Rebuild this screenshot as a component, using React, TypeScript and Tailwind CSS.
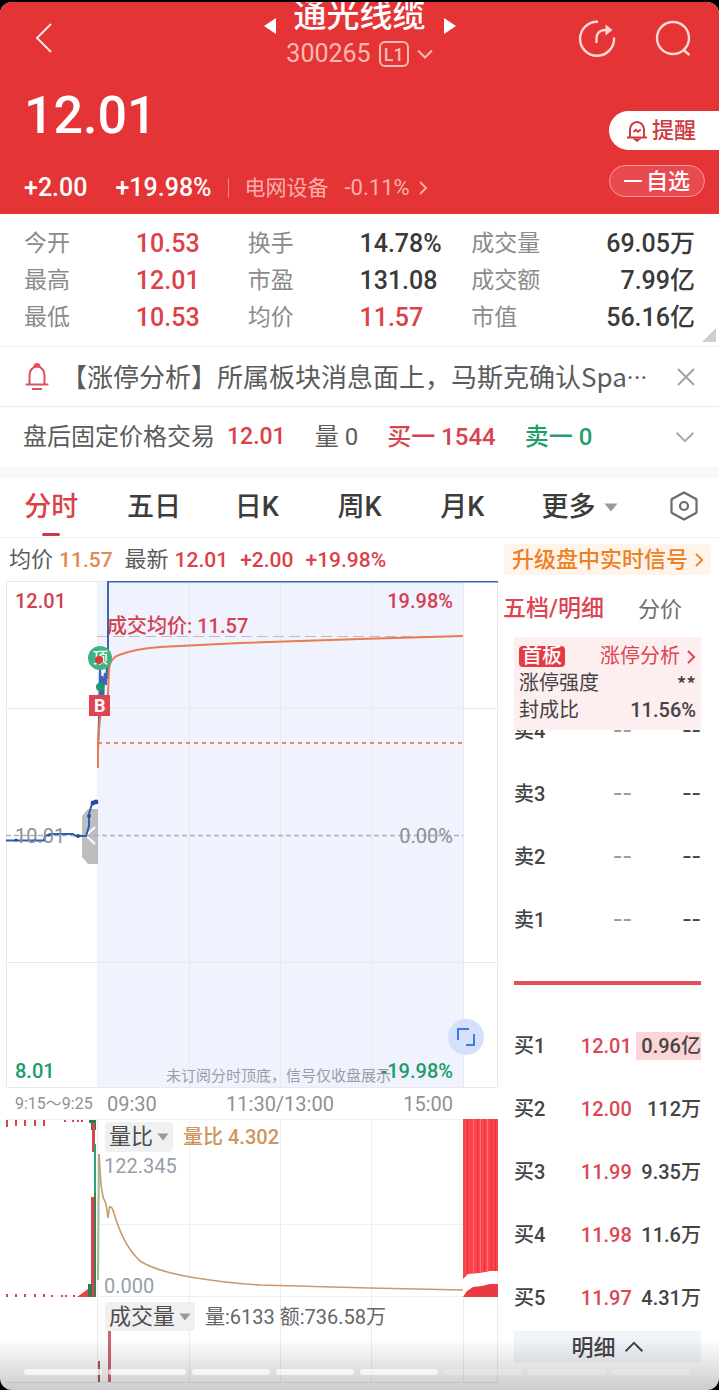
import React from "react";

type Tone = "red" | "dark";

const quoteStats: { label: string; value: string; tone: Tone }[] = [
  { label: "今开", value: "10.53", tone: "red" },
  { label: "换手", value: "14.78%", tone: "dark" },
  { label: "成交量", value: "69.05万", tone: "dark" },
  { label: "最高", value: "12.01", tone: "red" },
  { label: "市盈", value: "131.08", tone: "dark" },
  { label: "成交额", value: "7.99亿", tone: "dark" },
  { label: "最低", value: "10.53", tone: "red" },
  { label: "均价", value: "11.57", tone: "red" },
  { label: "市值", value: "56.16亿", tone: "dark" },
];

const periods = ["分时", "五日", "日K", "周K", "月K"];

const sellOrders = ["卖4", "卖3", "卖2", "卖1"];

const buyOrders = [
  { label: "买1", price: "12.01", amount: "0.96亿" },
  { label: "买2", price: "12.00", amount: "112万" },
  { label: "买3", price: "11.99", amount: "9.35万" },
  { label: "买4", price: "11.98", amount: "11.6万" },
  { label: "买5", price: "11.97", amount: "4.31万" },
];

const storySegments = [true, true, true, true, true, false, false, false];

function Chevron({ dir, className }: { dir: "left" | "right" | "down" | "up"; className: string }) {
  const paths = {
    left: "M17 2 L3 16 L17 30",
    right: "M3 2 L17 16 L3 30",
    down: "M2 3 L16 17 L30 3",
    up: "M2 17 L16 3 L30 17",
  };
  const box = dir === "left" || dir === "right" ? "0 0 20 32" : "0 0 32 20";
  return (
    <svg viewBox={box} className={className} fill="none" stroke="currentColor" aria-hidden="true">
      <path d={paths[dir]} strokeWidth="2" vectorEffect="non-scaling-stroke" />
    </svg>
  );
}

function Caret({ className }: { className: string }) {
  return (
    <svg viewBox="0 0 14 9" className={className} fill="currentColor" aria-hidden="true">
      <path d="M0.5 0.5 H13.5 L7 8.5 Z" />
    </svg>
  );
}

function Header() {
  return (
    <header className="bg-[#e43436] text-white">
      <div className="grid h-[76px] grid-cols-[1fr_auto_1fr] items-start">
        <button aria-label="返回" className="ml-[34px] mt-5 w-fit text-[#fde3df]">
          <Chevron dir="left" className="h-8 w-5" />
        </button>
        <div className="flex flex-col items-center">
          <div className="flex items-center gap-[18px]">
            <button aria-label="上一只" className="mt-4">
              <svg viewBox="0 0 12 16" className="h-4 w-3" fill="currentColor">
                <path d="M12 0 V16 L0 8 Z" />
              </svg>
            </button>
            <h1 className="-mt-1 text-[33px] font-medium leading-9">通光线缆</h1>
            <button aria-label="下一只" className="mt-4">
              <svg viewBox="0 0 12 16" className="h-4 w-3" fill="currentColor">
                <path d="M0 0 V16 L12 8 Z" />
              </svg>
            </button>
          </div>
          <button className="flex h-10 items-center gap-2 text-[#fbb9b3]">
            <span className="text-[25px] leading-10">300265</span>
            <span className="flex h-[26px] items-center rounded-md border-2 border-current px-[3px] text-[18px] font-medium">
              L1
            </span>
            <Chevron dir="down" className="h-[10px] w-4" />
          </button>
        </div>
        <div className="flex justify-end gap-9 pr-[26px] pt-4 text-[#fdd9d5]">
          <button aria-label="分享">
            <svg viewBox="0 0 40 40" className="h-10 w-10" fill="none" stroke="currentColor" strokeWidth="2.4">
              <path d="M21 3.8 A17 17 0 1 0 37 19.5" />
              <path d="M19.5 25 V21 C19.5 15 22.5 12 28 12 H30" />
              <path d="M28.5 6.5 L35.5 12 L28.5 17.5 Z" fill="currentColor" stroke="none" />
            </svg>
          </button>
          <button aria-label="搜索">
            <svg viewBox="0 0 40 40" className="h-10 w-10" fill="none" stroke="currentColor" strokeWidth="2.4">
              <circle cx="20" cy="20" r="16" />
              <path d="M30 31.5 L36.5 37" />
            </svg>
          </button>
        </div>
      </div>
      <div className="flex h-[136px] justify-between">
        <div className="flex flex-col">
          <p className="mt-2 pl-6 text-[52px] font-medium leading-[60px]">12.01</p>
          <div className="mt-6 flex items-center pl-6 text-[25px] font-medium leading-9">
            <span>+2.00</span>
            <span className="ml-7">+19.98%</span>
            <span className="mx-4 h-5 w-px bg-[#f08a88]" />
            <a href="#sector" className="flex items-center text-[21px] font-normal text-[#fbb0ac]">
              <span>电网设备</span>
              <span className="ml-4 text-[22px]">-0.11%</span>
              <Chevron dir="right" className="ml-2 h-[14px] w-[10px]" />
            </a>
          </div>
        </div>
        <div className="flex flex-col items-end gap-[15px] pt-[33px]">
          <button className="flex h-[39px] w-[110px] items-center gap-1 rounded-l-full bg-white pl-[17px] text-[22px] font-medium text-[#cf3a40]">
            <svg viewBox="0 0 22 22" className="h-[22px] w-[22px]" fill="none" stroke="currentColor" strokeWidth="2">
              <path d="M4 17 V9.5 A7 7.5 0 0 1 18 9.5 V17" />
              <path d="M1 17.5 H21" />
              <path d="M7 18.5 L11 21.5 L15 18.5" fill="currentColor" strokeWidth="1" />
              <path d="M7.5 12 L10 9.8 L12 11.8 L14.8 9.5" strokeWidth="1.8" />
            </svg>
            提醒
          </button>
          <button className="mr-[14px] flex h-8 w-24 items-center justify-center rounded-full border border-[#f49a97] bg-[#e84a50] text-[22px] font-medium">
            <svg viewBox="0 0 18 4" className="mr-1 h-1 w-[18px]" stroke="currentColor" strokeWidth="2">
              <path d="M0 2 H18" />
            </svg>
            自选
          </button>
        </div>
      </div>
    </header>
  );
}

function QuoteStats() {
  return (
    <section className="relative border-b border-[#efefef]">
      <dl className="grid grid-cols-3 px-6 pb-[10px] pt-[11px]">
        {quoteStats.map((s, i) => (
          <div key={s.label} className="grid grid-cols-2 leading-[37px]">
            <dt className="text-[23px] text-[#8b8b8b]">{s.label}</dt>
            <dd
              className={
                "whitespace-nowrap text-[25px] font-medium " +
                (s.tone === "red" ? "text-[#dc4147]" : "text-[#3a3a3a]") +
                (i % 3 === 2 ? " text-right" : "")
              }
            >
              {s.value}
            </dd>
          </div>
        ))}
      </dl>
      <svg viewBox="0 0 14 14" className="absolute bottom-1 right-[3px] h-[14px] w-[14px]" fill="#cfcfcf">
        <path d="M14 0 V14 H0 Z" />
      </svg>
    </section>
  );
}

function Notices() {
  return (
    <>
      <section className="flex h-[60px] items-center border-b border-[#ececec] pl-[25px] pr-6">
        <svg viewBox="0 0 24 28" className="h-7 w-6 shrink-0" fill="none" stroke="#e0525a" strokeWidth="2">
          <path d="M4.5 21 V12 A7.5 8.5 0 0 1 19.5 12 V21" />
          <path d="M1.5 21.5 H22.5" strokeLinecap="round" />
          <path d="M7 26 H17" />
          <path d="M9.5 3.5 A2.5 2.5 0 0 1 14.5 3.5 Z" fill="#e0525a" />
        </svg>
        <p className="ml-3 min-w-0 flex-1 whitespace-nowrap font-['Noto_Sans_CJK_SC',sans-serif] text-[26px] leading-9 text-[#5b5b5b]">
          【涨停分析】所属板块消息面上，马斯克确认Spa<span className="font-['Roboto',sans-serif]">···</span>
        </p>
        <button aria-label="关闭" className="text-[#a0a0a0]">
          <svg viewBox="0 0 18 18" className="h-[18px] w-[18px]" stroke="currentColor" strokeWidth="1.8">
            <path d="M1 1 L17 17 M17 1 L1 17" />
          </svg>
        </button>
      </section>
      <section className="flex h-[60px] items-center whitespace-nowrap pl-[23px] pr-6 text-[24px] leading-9 text-[#5b5b5b]">
        <span>盘后固定价格交易</span>
        <span className="ml-3 text-[23px] font-medium text-[#dc4147]">12.01</span>
        <span className="ml-[29px]">量 0</span>
        <span className="ml-[29px] font-medium text-[#d8434f]">买一 1544</span>
        <span className="ml-[29px] font-medium text-[#1f9f6b]">卖一 0</span>
        <button aria-label="展开" className="ml-auto text-[#a8a8a8]">
          <Chevron dir="down" className="h-3 w-5" />
        </button>
      </section>
      <div className="h-[11px] bg-[#f8f8f8]" />
    </>
  );
}

function PeriodTabs() {
  return (
    <nav className="grid h-[60px] grid-cols-7 grid-rows-1 items-center whitespace-nowrap border-b border-[#f0f0f0] text-[27px] font-medium text-[#3c3c3c]">
      {periods.map((p, i) => (
        <button key={p} className={"relative h-full " + (i === 0 ? "text-[#dd3f49]" : "")}>
          {p}
          {i === 0 && (
            <span className="absolute bottom-px left-1/2 h-[3px] w-[18px] -translate-x-1/2 rounded-full bg-[#c93a48]" />
          )}
        </button>
      ))}
      <button className="flex h-full items-center gap-2 pl-7">
        更多
        <Caret className="h-[9px] w-[14px] shrink-0 text-[#999]" />
      </button>
      <button aria-label="设置" className="justify-self-end pb-1 pr-5">
        <svg viewBox="0 0 30 32" className="h-8 w-[30px]" fill="none" stroke="#6b6b6b" strokeWidth="2.2">
          <path d="M15 2.5 L27 9 Q27.5 9.5 27.5 10 V22 Q27.5 22.5 27 23 L15 29.5 L3 23 Q2.5 22.5 2.5 22 V10 Q2.5 9.5 3 9 Z" />
          <circle cx="15" cy="16" r="4" />
        </svg>
      </button>
    </nav>
  );
}

function PriceLine() {
  return (
    <section className="flex h-[43px] items-center whitespace-nowrap pl-[9px] pr-2 text-[21px] font-medium leading-8">
      <span className="text-[22px] font-normal text-[#5b5b5b]">均价</span>
      <span className="ml-[6px] text-[#dc8c4d]">11.57</span>
      <span className="ml-3 text-[22px] font-normal text-[#5b5b5b]">最新</span>
      <span className="ml-[6px] text-[#dc4147]">12.01</span>
      <span className="ml-3 text-[#dc4147]">+2.00</span>
      <span className="ml-3 text-[#dc4147]">+19.98%</span>
      <a
        href="#upgrade"
        className="ml-auto flex h-[31px] items-center rounded bg-[#fef4ea] pl-2 pr-[7px] text-[22px] text-[#ee7f22]"
      >
        升级盘中实时信号
        <Chevron dir="right" className="ml-[6px] h-[14px] w-[10px]" />
      </a>
    </section>
  );
}

function PriceChart() {
  return (
    <div className="relative h-[507px] text-[20px] font-medium leading-6">
      <svg viewBox="0 0 492 507" preserveAspectRatio="none" className="h-full w-full" fill="none">
        <rect x="91" y="0" width="366" height="507" fill="#f0f2fe" />
        <g stroke="#e7e9ef" strokeWidth="1">
          <path d="M0 0.5 H492 M0 127.5 H492 M0 381.5 H492 M0 506.5 H492" />
          <path d="M0.5 0 V507 M183.5 0 V507 M274.5 0 V507 M365.5 0 V507 M457.5 0 V507 M491.5 0 V507" />
        </g>
        <path d="M92 228 V283 H82 L76 276 V235 L82 228 Z" fill="#bcbdbf" />
        <path d="M89 246 L80 254.5 L89 263" stroke="#fff" strokeWidth="2" />
        <path d="M91 55.5 H457" stroke="#c9b3bd" strokeWidth="1" strokeDasharray="11 5" />
        <path d="M0 254.5 H457" stroke="#aeb0b8" strokeWidth="1.5" strokeDasharray="5 3" />
        <path d="M92 162 H457" stroke="#f08c52" strokeWidth="2" strokeDasharray="4 4" />
        <path
          d="M0 259.5 H38 L39 255 L45 253 H67 L70 255 H80 L83 245 V233 L86 223 L90 221"
          stroke="#2d5fb0"
          strokeWidth="2"
        />
        <g fill="#234f9e">
          <circle cx="87" cy="222" r="2.4" />
          <circle cx="90" cy="221" r="2.4" />
          <circle cx="83" cy="235" r="2" />
          <circle cx="10" cy="259" r="1.6" />
          <circle cx="29" cy="259" r="1.6" />
          <circle cx="43" cy="254" r="1.6" />
          <circle cx="72" cy="255" r="2" />
        </g>
        <path
          d="M92 168 L93 140 L94 86 L95 118 L96 95 L97 124 L98 98 L99 92 L100 104 L101 84 L102 98 V0.5 H492"
          stroke="#3a66b4"
          strokeWidth="2"
        />
        <path d="M92 187 V160 L94 138 L96 122 L102 114 L103 88 Q104 77 113 74 Q128 68 154 66 L234 62 L354 58 L457 55" stroke="#ea7b4e" strokeWidth="2" />
        <circle cx="94" cy="106" r="4" fill="#1c9c68" />
      </svg>
      <span className="absolute left-[16.7%] top-[65px] flex h-6 w-6 items-center justify-center rounded-full bg-[#3cb583] text-[15px] text-white">
        顶
        <span className="absolute left-[7px] top-[10px] h-2 w-2 rounded-full bg-[#d9383c]" />
      </span>
      <span className="absolute left-[16.9%] top-[114px] flex h-[21px] w-[21px] items-center justify-center bg-[#e04450] text-[18px] font-bold text-white">
        B
      </span>
      <span className="absolute left-[9px] top-2 text-[#d5404f]">12.01</span>
      <span className="absolute right-[45px] top-2 text-[#d5404f]">19.98%</span>
      <span className="absolute left-[101px] top-[33px] text-[#d5404f]">成交均价: 11.57</span>
      <span className="absolute left-[9px] top-[243px] font-normal text-[#8d8f94]">10.01</span>
      <span className="absolute right-[45px] top-[243px] font-normal text-[#8d8f94]">0.00%</span>
      <span className="absolute bottom-[5px] left-[9px] text-[#1c9c68]">8.01</span>
      <span className="absolute bottom-0 right-[107px] text-[15px] font-normal text-[#9a9da8]">
        未订阅分时顶底，信号仅收盘展示
      </span>
      <span className="absolute bottom-[5px] right-[45px] text-[#1c9c68]">-19.98%</span>
      <button
        aria-label="全屏"
        className="absolute bottom-[33px] right-[14px] flex h-9 w-9 items-center justify-center rounded-full bg-[#d5e1fb]"
      >
        <svg viewBox="0 0 18 18" className="h-[18px] w-[18px]" fill="none" stroke="#3f78e8" strokeWidth="2">
          <path d="M1 12 V1 H12" />
          <path d="M9 17 H17 V6" />
        </svg>
      </button>
    </div>
  );
}

function TimeAxis() {
  return (
    <div className="grid h-[31px] grid-cols-[minmax(0,91fr)_minmax(0,366fr)_minmax(0,35fr)] items-center whitespace-nowrap text-[20px] text-[#8f9196]">
      <span className="pl-[9px] text-[16px]">9:15～9:25</span>
      <span className="flex justify-between px-[10px]">
        <span>09:30</span>
        <span>11:30/13:00</span>
        <span>15:00</span>
      </span>
    </div>
  );
}

function RatioChart() {
  return (
    <div className="relative h-[179px] text-[20px] leading-6">
      <svg viewBox="0 0 492 179" preserveAspectRatio="none" className="h-full w-full" fill="none">
        <path
          d="M0 0.5 H492 M91 105.5 H492 M91 177.5 H492 M91.5 0 V179 M183.5 0 V179 M274.5 0 V179 M365.5 0 V179 M491.5 0 V179"
          stroke="#efeff1"
        />
        <g stroke="#d9404e" strokeWidth="2">
          <path d="M1 1 V8 M10 1 V7 M19 1 V7 M29 1 V7 M38 1 V7" />
          <path d="M59 1 V3 M67 1 V3 M72 1 V3 M76 1 V3" />
          <path d="M1 175 V178 M10 175 V178 M19 175 V178 M29 175 V178 M38 175 V178 M46 176 V178 M56 176 V178 M60 176 V178 M68 176 V178" />
        </g>
        <path d="M71 178 L82 170 V178 Z" fill="#ef3f48" />
        <path d="M83 1 H90 V11 H85 V4 H83 Z" fill="#2e7a56" />
        <rect x="86" y="4" width="3" height="29" fill="#d24a50" />
        <rect x="88" y="25" width="2" height="52" fill="#2fa374" />
        <rect x="85" y="78" width="3" height="100" fill="#d24a50" />
        <rect x="88" y="74" width="2" height="104" fill="#4a7a50" />
        <rect x="82" y="165" width="4" height="13" fill="#2e7a56" />
        <path d="M92 161 L93 35" stroke="#9cbf88" strokeWidth="2" />
        <path
          d="M93 35 L95 66 L97 78 L100 85 L102 99 L103.5 88 Q106 87 108 94 Q117 126 134 142 Q150 152 184 158 Q220 164 254 166 L364 169 L457 171"
          stroke="#c99b6c"
          strokeWidth="1.6"
        />
        <path d="M457 0 H492 V152 L484 152 L474 154 L462 155 L457 160 Z" fill="#fb444c" />
        <path d="M457 178 L461 172 L467 168 L476 167 L484 165 H492 V178 Z" fill="#e93a44" />
        <path d="M467.5 0 V154 M474.5 0 V154 M481.5 0 V153" stroke="#ff6e72" />
        <path d="M461.5 0 V155 M471.5 0 V154 M478.5 0 V153 M485.5 0 V152 M489.5 0 V152" stroke="#e6323d" />
      </svg>
      <div className="absolute left-[99px] top-[3px] flex items-center gap-[10px]">
        <button className="flex h-[30px] items-center gap-1 rounded-sm bg-[#f0f0f1] px-1 text-[22px] text-[#4d4d4d]">
          量比
          <Caret className="h-2 w-3 text-[#999]" />
        </button>
        <span className="font-medium text-[#cf9560]">量比 4.302</span>
      </div>
      <span className="absolute left-[98px] top-[35px] text-[#94a0ab]">122.345</span>
      <span className="absolute left-[98px] top-[155px] text-[#94a0ab]">0.000</span>
    </div>
  );
}

function VolumeChart() {
  return (
    <div className="relative h-[85px] text-[20px] leading-6">
      <svg viewBox="0 0 492 85" preserveAspectRatio="none" className="h-full w-full" fill="none">
        <path
          d="M0 84.5 H492 M91.5 0 V85 M183.5 0 V85 M274.5 0 V85 M365.5 0 V85 M457.5 0 V85 M491.5 0 V85"
          stroke="#ececee"
        />
        <rect x="92" y="63" width="2" height="21" fill="#b5545f" />
        <rect x="102" y="33" width="3" height="51" fill="#cf6470" />
      </svg>
      <div className="absolute left-[99px] top-1 flex items-center gap-[10px] whitespace-nowrap">
        <button className="flex h-[29px] items-center gap-1 rounded-sm bg-[#f0f0f1] px-1 text-[22px] text-[#4d4d4d]">
          成交量
          <Caret className="h-2 w-3 text-[#999]" />
        </button>
        <span className="text-[#666]">量:6133 额:736.58万</span>
      </div>
    </div>
  );
}

function OrderBook() {
  return (
    <aside className="min-w-0 flex-[213] pr-2">
      <div className="flex h-14 items-center gap-[34px] whitespace-nowrap pl-[5px]">
        <button className="text-[23px] font-medium text-[#dd4350]">五档/明细</button>
        <button className="text-[22px] text-[#6f6f6f]">分价</button>
      </div>
      <div className="pl-4 pr-[10px]">
        <section className="relative z-10 -mb-[31px] h-[93px] bg-[#fdeeef] px-[5px] pt-[6px] text-[20px] leading-[27px] text-[#444]">
          <div className="flex h-[27px] items-center justify-between">
            <span className="flex h-[21px] items-center rounded bg-[#e33a44] px-[3px] font-medium text-white">首板</span>
            <a href="#limit" className="flex items-center gap-[6px] text-[#dd4350]">
              涨停分析
              <Chevron dir="right" className="h-[14px] w-[10px]" />
            </a>
          </div>
          <div className="flex justify-between">
            <span>涨停强度</span>
            <span className="font-['Noto_Sans_CJK_SC',sans-serif] font-medium">**</span>
          </div>
          <div className="flex justify-between">
            <span>封成比</span>
            <span className="font-medium">11.56%</span>
          </div>
        </section>
        <table className="w-full table-fixed whitespace-nowrap text-[20px] leading-7 text-[#444]">
          <colgroup>
            <col className="w-[28%]" />
            <col className="w-[35%]" />
            <col className="w-[37%]" />
          </colgroup>
          <tbody>
            {sellOrders.map((label) => (
              <tr key={label} className="h-[63px]">
                <th scope="row" className="text-left font-medium">{label}</th>
                <td className="pb-[6px] text-right font-['Noto_Sans_CJK_SC',sans-serif] text-[27px] text-[#999]">--</td>
                <td className="pb-[6px] text-right font-['Noto_Sans_CJK_SC',sans-serif] text-[27px]">--</td>
              </tr>
            ))}
            <tr className="h-[63px]">
              <td colSpan={3}>
                <div className="h-1 bg-[#e35156]" />
              </td>
            </tr>
            {buyOrders.map((o, i) => (
              <tr key={o.label} className="h-[63px]">
                <th scope="row" className="text-left font-medium">{o.label}</th>
                <td className="text-right font-medium text-[#dc4753]">{o.price}</td>
                <td className="pl-1">
                  <span className={"block text-right font-medium " + (i === 0 ? "bg-[#fbd5d8]" : "")}>{o.amount}</span>
                </td>
              </tr>
            ))}
          </tbody>
        </table>
        <button className="mt-[2px] flex h-8 w-full items-center justify-center gap-2 bg-[#f1f4f8] text-[22px] font-medium text-[#444]">
          明细
          <Chevron dir="up" className="h-3 w-5" />
        </button>
      </div>
    </aside>
  );
}

export default function App() {
  return (
    <div className="min-h-screen bg-black pt-[2px] font-['Roboto','Noto_Sans_CJK_SC',sans-serif]">
      <main className="relative overflow-hidden rounded-xl bg-white pb-[7px]">
        <Header />
        <QuoteStats />
        <Notices />
        <PeriodTabs />
        <PriceLine />
        <div className="flex">
          <div className="min-w-0 flex-[492] pl-[6px]">
            <PriceChart />
            <TimeAxis />
            <RatioChart />
            <VolumeChart />
          </div>
          <OrderBook />
        </div>
        <div className="pointer-events-none absolute inset-x-0 bottom-0 z-20 flex h-[52px] items-end gap-[6px] bg-linear-to-b from-black/0 to-black/20 px-6 pb-[15px] pr-[29px]">
          {storySegments.map((seen, i) => (
            <span key={i} className={"h-[6px] flex-1 rounded-full " + (seen ? "bg-white/70" : "bg-white/20")} />
          ))}
        </div>
      </main>
    </div>
  );
}
